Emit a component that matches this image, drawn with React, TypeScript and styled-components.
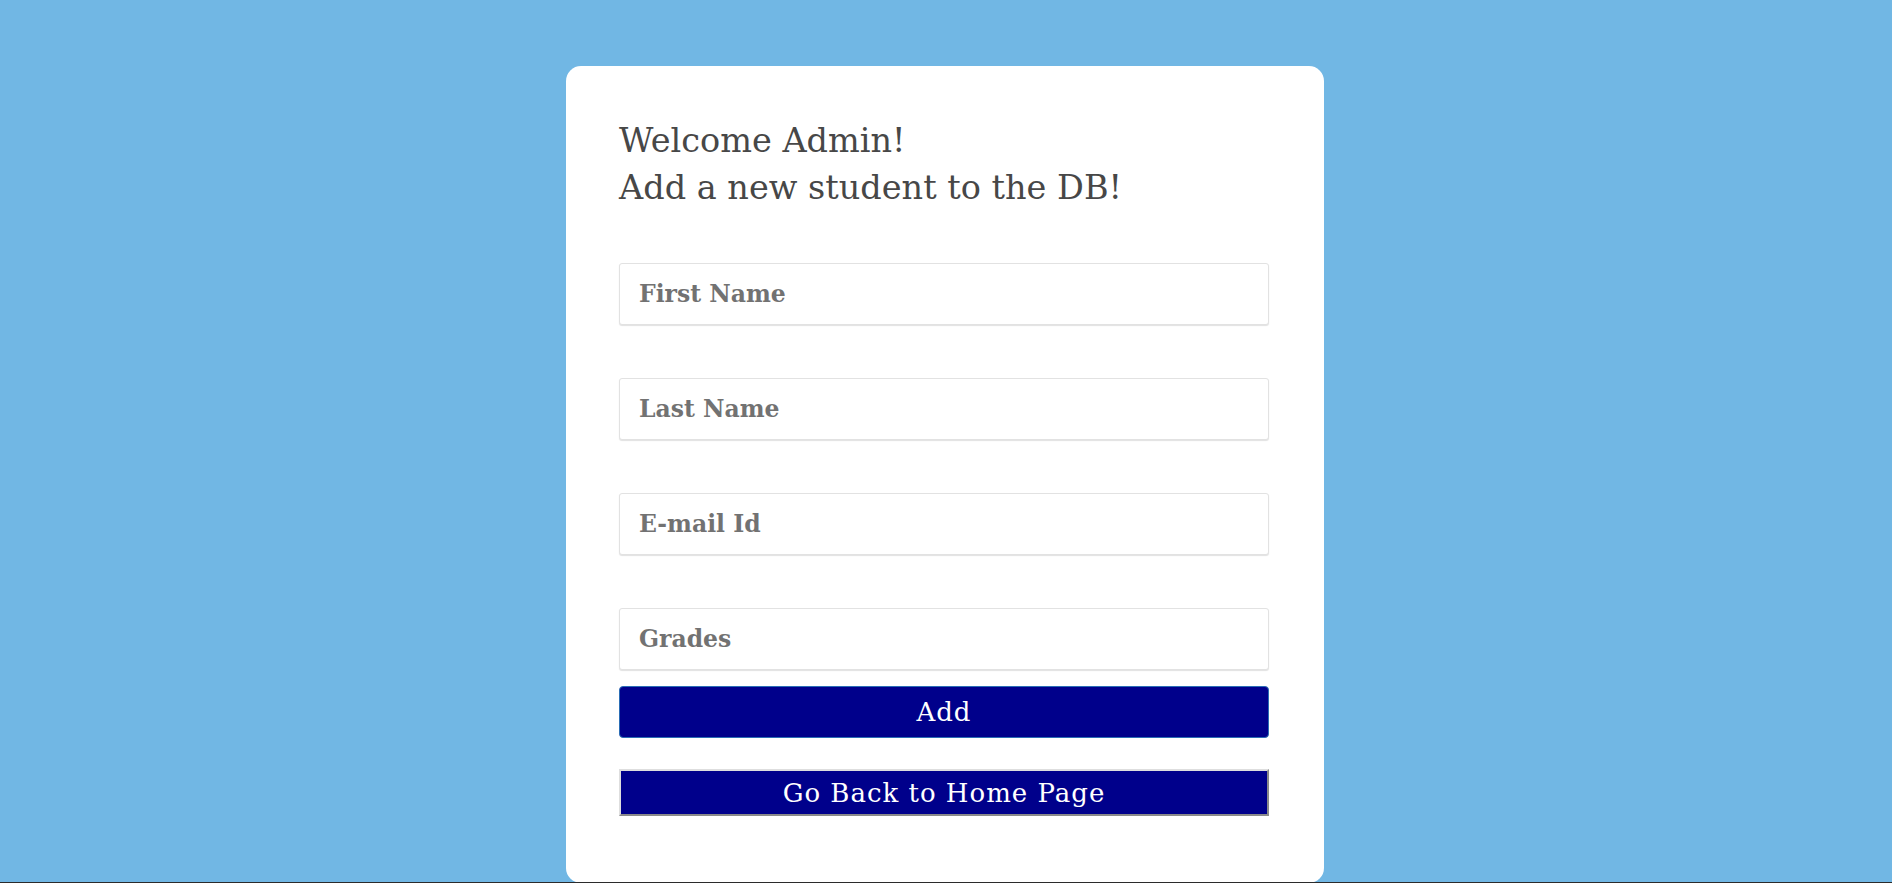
import React from "react";
import styled, { createGlobalStyle } from "styled-components";

const GlobalStyle = createGlobalStyle`
  html, body {
    margin: 0;
    padding: 0;
    background: #71b7e4;
    height: 100%;
    overflow: hidden;
  }
  body {
    font-family: "DejaVu Serif", "Liberation Serif", serif;
  }
`;

const Page = styled.div`
  min-height: 883px;
  display: flex;
  justify-content: center;
  align-items: flex-start;
  padding: 66px 2px 0 0;
  box-sizing: border-box;
`;

const Card = styled.div`
  width: 758px;
  box-sizing: border-box;
  background: #ffffff;
  border-radius: 15px;
  padding: 51px 55px 67px 53px;
  display: flex;
  flex-direction: column;
`;

const Heading = styled.h2`
  margin: 0 0 52px;
  font-family: "DejaVu Serif", serif;
  font-weight: normal;
  font-size: 33.5px;
  line-height: 47px;
  color: #474747;
`;

const Fields = styled.div`
  display: flex;
  flex-direction: column;
  gap: 53px;
`;

const Field = styled.input`
  box-sizing: border-box;
  width: 100%;
  height: 62px;
  padding: 0 19px;
  border: 1px solid #e2e2e2;
  border-radius: 3px;
  box-shadow: 0 1px 1px rgba(0, 0, 0, 0.12);
  font-family: "DejaVu Serif", serif;
  font-weight: bold;
  font-size: 23.5px;
  color: #333;
  outline: none;
  &::placeholder {
    color: #727272;
  }
`;

const PrimaryButton = styled.button<{ $top: number; $h: number; $outset?: boolean }>`
  box-sizing: border-box;
  width: 100%;
  height: ${(p) => p.$h}px;
  margin-top: ${(p) => p.$top}px;
  background: #00008b;
  color: #ffffff;
  font-family: "DejaVu Serif", serif;
  font-size: 26px;
  letter-spacing: 1px;
  cursor: pointer;
  border-radius: ${(p) => (p.$outset ? "0" : "4px")};
  border: ${(p) => (p.$outset ? "2px solid" : "1px solid #2a68ad")};
  border-color: ${(p) => (p.$outset ? "#dedede #8a8a8a #8a8a8a #dedede" : "#2a6db5")};
  padding: 0;
`;

const BottomEdge = styled.div`
  position: fixed;
  left: 0;
  right: 0;
  bottom: 0;
  height: 1px;
  background: #2b2b2b;
`;

export default function App() {
  return (
    <>
      <GlobalStyle />
      <Page>
        <Card>
          <Heading>
            Welcome Admin!
            <br />
            Add a new student to the DB!
          </Heading>
          <Fields>
            <Field type="text" placeholder="First Name" />
            <Field type="text" placeholder="Last Name" />
            <Field type="email" placeholder="E-mail Id" />
            <Field type="text" placeholder="Grades" />
          </Fields>
          <PrimaryButton $top={16} $h={52}>Add</PrimaryButton>
          <PrimaryButton $top={31} $h={47} $outset>
            Go Back to Home Page
          </PrimaryButton>
        </Card>
      </Page>
      <BottomEdge />
    </>
  );
}
